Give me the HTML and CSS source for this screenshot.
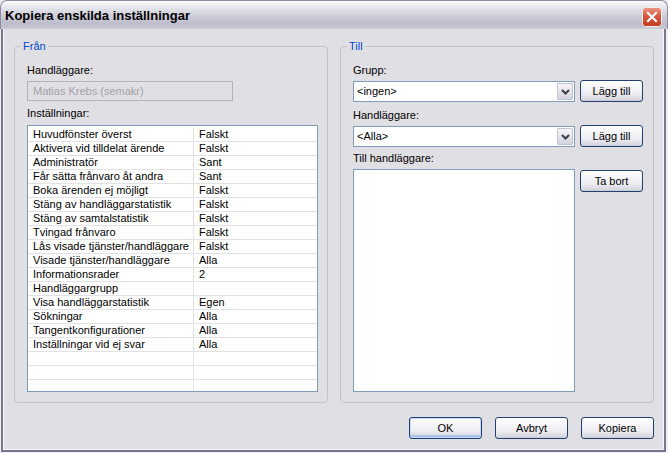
FILE: index.html
```html
<!DOCTYPE html>
<html lang="sv">
<head>
<meta charset="utf-8">
<title>Kopiera enskilda inställningar</title>
<link rel="stylesheet" href="styles.css">
</head>
<body>
<div class="window">
  <div class="titlebar">
    <span class="title">Kopiera enskilda inställningar</span>
    <span class="close" aria-label="Stäng">
      <svg width="20" height="20" viewBox="0 0 20 20">
        <defs>
          <linearGradient id="cg" x1="0" y1="0" x2="0" y2="1">
            <stop offset="0" stop-color="#ec9a86"/>
            <stop offset="0.45" stop-color="#d7573d"/>
            <stop offset="1" stop-color="#c43a20"/>
          </linearGradient>
        </defs>
        <rect x="0.5" y="0.5" width="19" height="19" rx="3" fill="url(#cg)" stroke="#f4f0f0"/>
        <path d="M6 6 L14 14 M14 6 L6 14" stroke="#fff" stroke-width="2.2" stroke-linecap="square"/>
      </svg>
    </span>
  </div>
  <div class="frame">
    <div class="frame-in">
      <div class="client">
        <div class="groups">
          <div class="group group-from">
            <span class="legend">Från</span>
            <div class="label">Handläggare:</div>
            <div class="textbox disabled">Matias Krebs (semakr)</div>
            <div class="label label-gap">Inställningar:</div>
            <div class="grid">
              <div class="row"><span class="key">Huvudfönster överst</span><span class="val">Falskt</span></div>
              <div class="row"><span class="key">Aktivera vid tilldelat ärende</span><span class="val">Falskt</span></div>
              <div class="row"><span class="key">Administratör</span><span class="val">Sant</span></div>
              <div class="row"><span class="key">Får sätta frånvaro åt andra</span><span class="val">Sant</span></div>
              <div class="row"><span class="key">Boka ärenden ej möjligt</span><span class="val">Falskt</span></div>
              <div class="row"><span class="key">Stäng av handläggarstatistik</span><span class="val">Falskt</span></div>
              <div class="row"><span class="key">Stäng av samtalstatistik</span><span class="val">Falskt</span></div>
              <div class="row"><span class="key">Tvingad frånvaro</span><span class="val">Falskt</span></div>
              <div class="row"><span class="key">Lås visade tjänster/handläggare</span><span class="val">Falskt</span></div>
              <div class="row"><span class="key">Visade tjänster/handläggare</span><span class="val">Alla</span></div>
              <div class="row"><span class="key">Informationsrader</span><span class="val">2</span></div>
              <div class="row"><span class="key">Handläggargrupp</span><span class="val"></span></div>
              <div class="row"><span class="key">Visa handläggarstatistik</span><span class="val">Egen</span></div>
              <div class="row"><span class="key">Sökningar</span><span class="val">Alla</span></div>
              <div class="row"><span class="key">Tangentkonfigurationer</span><span class="val">Alla</span></div>
              <div class="row"><span class="key">Inställningar vid ej svar</span><span class="val">Alla</span></div>
              <div class="row"><span class="key"></span><span class="val"></span></div>
              <div class="row"><span class="key"></span><span class="val"></span></div>
              <div class="row"><span class="key"></span><span class="val"></span></div>
            </div>
          </div>
          <div class="group group-to">
            <span class="legend">Till</span>
            <div class="label">Grupp:</div>
            <div class="line">
              <div class="combo"><span class="combo-text">&lt;ingen&gt;</span><span class="drop"><svg width="9" height="6" viewBox="0 0 9 6"><path d="M1 1 L4.5 4.5 L8 1" fill="none" stroke="#3c3c50" stroke-width="2"/></svg></span></div>
              <button class="btn btn-side">Lägg till</button>
            </div>
            <div class="label label-gap2">Handläggare:</div>
            <div class="line">
              <div class="combo"><span class="combo-text">&lt;Alla&gt;</span><span class="drop"><svg width="9" height="6" viewBox="0 0 9 6"><path d="M1 1 L4.5 4.5 L8 1" fill="none" stroke="#3c3c50" stroke-width="2"/></svg></span></div>
              <button class="btn btn-side">Lägg till</button>
            </div>
            <div class="label label-gap3">Till handläggare:</div>
            <div class="line">
              <div class="listbox"></div>
              <button class="btn btn-side btn-remove">Ta bort</button>
            </div>
          </div>
        </div>
        <div class="buttons">
          <button class="btn btn-main btn-default">OK</button>
          <button class="btn btn-main">Avbryt</button>
          <button class="btn btn-main">Kopiera</button>
        </div>
      </div>
    </div>
  </div>
</div>
</body>
</html>
```
FILE: styles.css
```css
* { box-sizing: border-box; }
html, body {
  margin: 0;
  padding: 0;
  background: #eeeef2;
}
body {
  font-family: "Liberation Sans", Arial, sans-serif;
  font-size: 11px;
  line-height: 13px;
  color: #000;
}
.window {
  width: 668px;
  height: 453px;
  display: flex;
  flex-direction: column;
}
.titlebar {
  height: 29px;
  flex: none;
  display: flex;
  align-items: center;
  justify-content: space-between;
  padding: 1px 6px 0 4px;
  border-radius: 7px 7px 0 0;
  border: 1px solid #8a8aa0;
  border-bottom: none;
  background: linear-gradient(to bottom, #fdfdfe 0%, #eeeef3 12%, #dcdce5 35%, #c9c9d6 60%, #bcbccb 82%, #c6c6d2 96%, #d4d4de 100%);
}
.title {
  font-family: "Liberation Sans", Arial, sans-serif;
  font-weight: bold;
  font-size: 13px;
  color: #000;
  line-height: 16px;
}
.close {
  width: 20px;
  height: 20px;
  display: block;
  margin-right: -1px;
  margin-top: 2px;
}
.close svg { display: block; }
.frame {
  flex: 1;
  display: flex;
  border: solid #efeff3;
  border-width: 0 2px 1px 1px;
}
.frame-in {
  flex: 1;
  display: flex;
  border: solid #77778f;
  border-width: 0 2px 2px 2px;
}
.client {
  flex: 1;
  border: solid #f4f4f7;
  border-width: 0 1px 1px 1px;
  background: #e0dfe3;
  padding: 17px 9px 0 10px;
  display: flex;
  flex-direction: column;
}
.groups {
  display: flex;
  gap: 12px;
}
.group {
  position: relative;
  width: 314px;
  height: 357px;
  border: 1px solid #c3c3cb;
  border-radius: 4px;
  display: flex;
  flex-direction: column;
}
.group-from { padding: 17px 9px 10px 12px; }
.group-to { padding: 17px 10px 10px 12px; }
.legend {
  position: absolute;
  top: -7px;
  left: 6px;
  padding: 0 2px;
  background: #e0dfe3;
  color: #0046d5;
  line-height: 13px;
}
.label { height: 13px; white-space: nowrap; }
.label-gap { margin-top: 6px; }
.label-gap2 { margin-top: 7px; }
.label-gap3 { margin-top: 5px; }
.textbox {
  margin-top: 4px;
  width: 206px;
  height: 20px;
  border: 1px solid #b4b4b8;
  padding: 2px 5px;
  line-height: 14px;
}
.textbox.disabled {
  background: #e0dfe3;
  color: #a2a2a6;
}
.grid {
  margin-top: 5px;
  height: 267px;
  border: 1px solid #7f9db9;
  background: #fff;
  padding-top: 2px;
  overflow: hidden;
}
.row {
  display: grid;
  grid-template-columns: 166px 1fr;
  height: 14px;
  border-bottom: 1px solid #e2e2e6;
}
.key, .val {
  line-height: 13px;
  white-space: nowrap;
  overflow: hidden;
}
.key {
  padding-left: 5px;
  border-right: 1px solid #e2e2e6;
}
.val { padding-left: 5px; }
.row:last-child { height: 20px; }
.line {
  display: flex;
  align-items: flex-start;
  margin-top: 4px;
}
.combo {
  width: 222px;
  height: 21px;
  border: 1px solid #7f9db9;
  background: #fff;
  display: flex;
  align-items: stretch;
  justify-content: space-between;
  padding: 1px 1px 1px 3px;
}
.combo-text { line-height: 17px; }
.drop {
  width: 16px;
  border: 1px solid #c4c4d0;
  border-radius: 1px;
  background: linear-gradient(to bottom, #f6f6f9 0%, #e4e4ec 50%, #d3d3de 100%);
  display: flex;
  align-items: center;
  justify-content: center;
}
.drop svg { display: block; margin-top: 1px; }
.btn {
  font-family: "Liberation Sans", Arial, sans-serif;
  font-size: 11px;
  color: #000;
  height: 22px;
  padding: 0;
  border: 1px solid #23416e;
  border-radius: 3px;
  background: linear-gradient(to bottom, #ffffff 0%, #f7f7fa 30%, #ececf1 65%, #d8d8e2 92%, #c8c8d4 100%);
  box-shadow: inset 0 1px 0 #fff;
  line-height: 18px;
}
.btn-side {
  width: 63px;
  margin-left: 5px;
  margin-top: -1px;
}
.btn-remove { margin-top: 1px; }
.listbox {
  width: 222px;
  height: 223px;
  border: 1px solid #7f9db9;
  background: #fff;
}
.buttons {
  display: flex;
  justify-content: flex-end;
  gap: 13px;
  margin-top: 14px;
}
.btn-main { width: 73px; }
.btn-default {
  border-color: #1d3f78;
  box-shadow: inset 0 0 0 1px #c9dbf6, inset 0 -2px 0 1px #a9c3ee;
}
```
